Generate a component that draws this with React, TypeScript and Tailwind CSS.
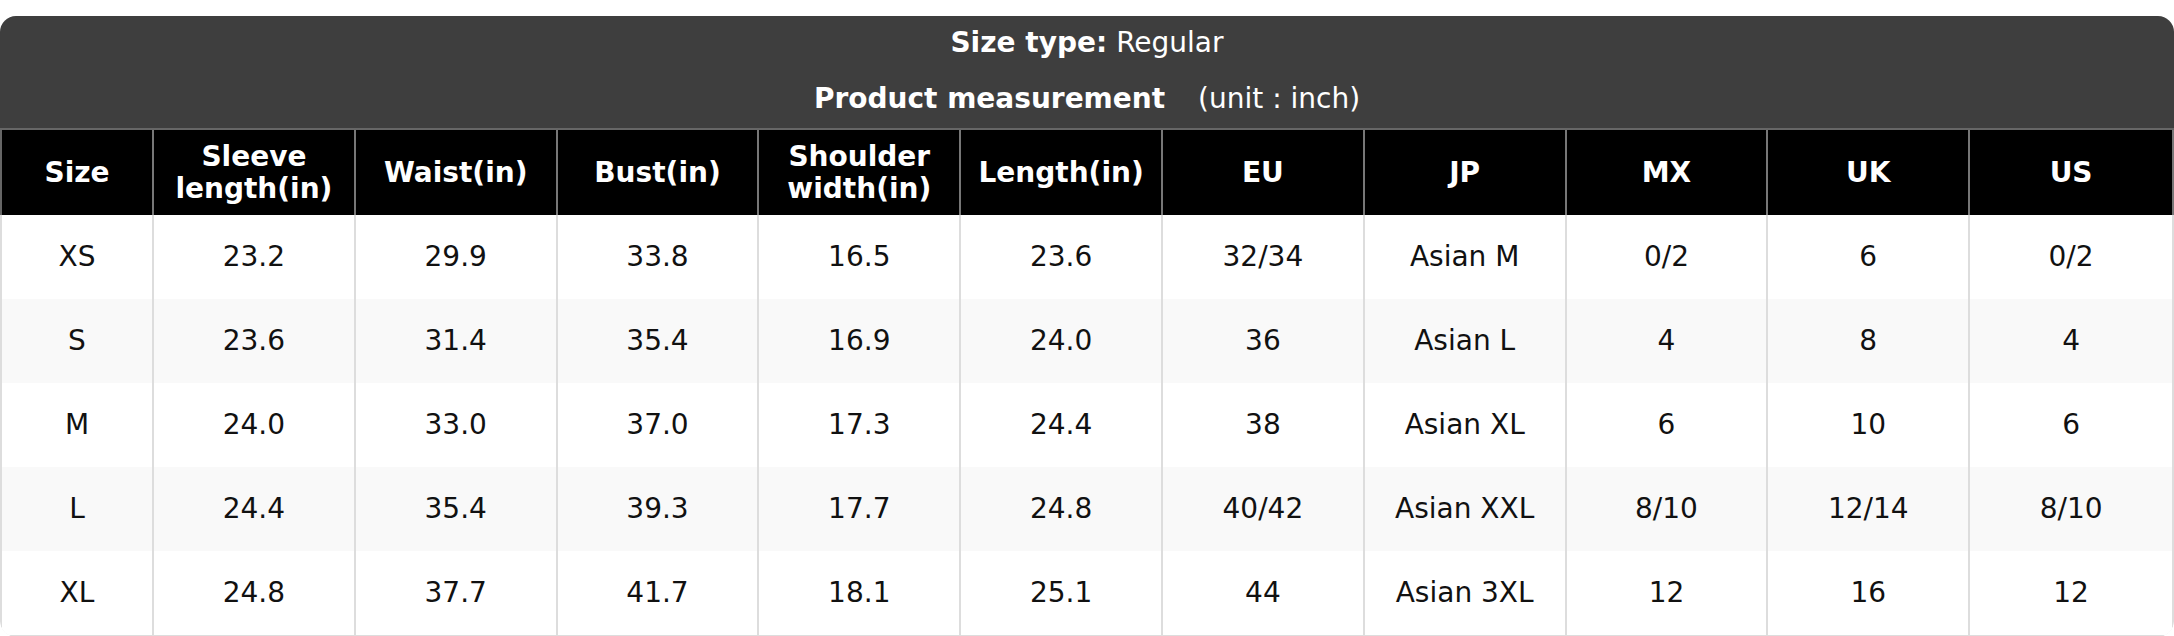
const headers = [
  'Size',
  'Sleeve length(in)',
  'Waist(in)',
  'Bust(in)',
  'Shoulder width(in)',
  'Length(in)',
  'EU',
  'JP',
  'MX',
  'UK',
  'US',
];

const rows = [
  ['XS', '23.2', '29.9', '33.8', '16.5', '23.6', '32/34', 'Asian M', '0/2', '6', '0/2'],
  ['S', '23.6', '31.4', '35.4', '16.9', '24.0', '36', 'Asian L', '4', '8', '4'],
  ['M', '24.0', '33.0', '37.0', '17.3', '24.4', '38', 'Asian XL', '6', '10', '6'],
  ['L', '24.4', '35.4', '39.3', '17.7', '24.8', '40/42', 'Asian XXL', '8/10', '12/14', '8/10'],
  ['XL', '24.8', '37.7', '41.7', '18.1', '25.1', '44', 'Asian 3XL', '12', '16', '12'],
];

export default function App() {
  return (
    <div className="min-h-screen bg-white pt-[16px] font-['DejaVu_Sans',sans-serif]">
      <div className="w-[2174px] overflow-hidden rounded-[16px]">
        <div className="flex h-[112px] flex-col bg-[#3e3e3e] text-[28px] text-white">
          <div className="flex h-[54px] items-center justify-center">
            <span className="font-bold">Size type:</span>
            <span className="ml-[9px]">Regular</span>
          </div>
          <div className="flex h-[58px] items-center justify-center">
            <span className="font-bold">Product measurement</span>
            <span className="ml-[33px]">(unit : inch)</span>
          </div>
        </div>

        <div className="grid grid-cols-[152px_repeat(9,201.8px)_1fr] border-t-2 border-[#666] bg-black">
          {headers.map((h, i) => (
            <div
              key={h}
              className={`flex h-[85px] items-center justify-center px-2 text-center text-[28px] leading-[32px] font-bold text-white ${
                i === 0 ? 'border-l-2 border-[#666]' : 'border-l-2 border-[#777]'
              } ${i === headers.length - 1 ? 'border-r-2 border-[#777]' : ''}`}
            >
              {h}
            </div>
          ))}
        </div>

        <div className="rounded-b-[16px] border-x-2 border-b-2 border-[#ddd]">
          {rows.map((row, r) => (
            <div
              key={row[0]}
              className={`grid grid-cols-[150px_repeat(9,201.8px)_1fr] ${r % 2 === 1 ? 'bg-[#f9f9f9]' : 'bg-white'}`}
            >
              {row.map((cell, c) => (
                <div
                  key={c}
                  className={`flex h-[84px] items-center justify-center text-[28px] text-[#111] ${
                    c === 0 ? '' : 'border-l-2 border-[#ddd]'
                  }`}
                >
                  {cell}
                </div>
              ))}
            </div>
          ))}
        </div>
      </div>
    </div>
  );
}
